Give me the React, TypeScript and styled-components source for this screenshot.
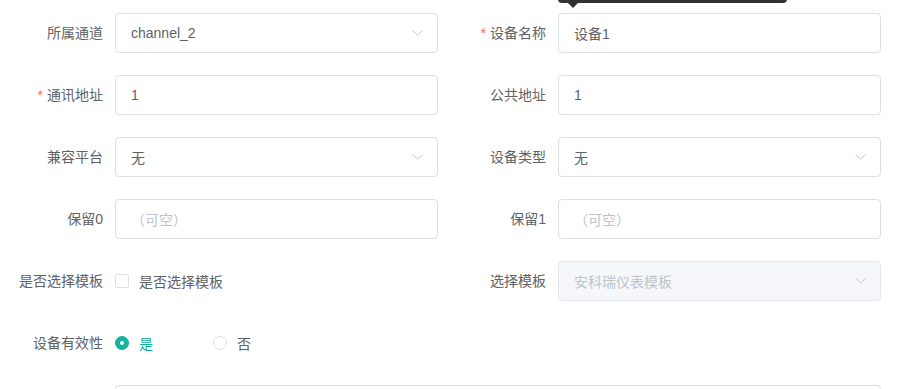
import React from "react";
import styled, { createGlobalStyle } from "styled-components";

const Global = createGlobalStyle`
  html, body { margin: 0; padding: 0; background: #fff; }
  body {
    font-family: "Liberation Sans", "Noto Sans CJK SC", sans-serif;
    font-size: 14px;
    color: #606266;
    overflow: hidden;
  }
`;

const Form = styled.div`
  display: grid;
  grid-template-columns: 438px 438px;
  column-gap: 5px;
  row-gap: 22px;
  padding-top: 13px;
  width: 881px;
`;

const Item = styled.div<{ $full?: boolean }>`
  position: relative;
  display: flex;
  align-items: flex-start;
  min-height: 40px;
  grid-column: ${(p) => (p.$full ? "1 / -1" : "auto")};
`;

const Label = styled.label`
  flex: 0 0 115px;
  box-sizing: border-box;
  padding-right: 12px;
  text-align: right;
  line-height: 40px;
  font-size: 14px;
  color: #606266;
  white-space: nowrap;
`;

const Star = styled.span`
  color: #f56c6c;
  margin-right: 4px;
`;

const Control = styled.div`
  flex: 1;
  min-width: 0;
  display: flex;
  align-items: center;
  min-height: 40px;
`;

const Box = styled.div<{ $disabled?: boolean; $tall?: boolean }>`
  position: relative;
  box-sizing: border-box;
  width: 100%;
  height: ${(p) => (p.$tall ? "64px" : "40px")};
  border: 1px solid ${(p) => (p.$disabled ? "#e4e7ed" : "#dcdfe6")};
  background: ${(p) => (p.$disabled ? "#f5f7fa" : "#fff")};
  border-radius: 4px;
  padding: 0 15px;
  display: flex;
  align-items: center;
  font-size: 14px;
  color: ${(p) => (p.$disabled ? "#c0c4cc" : "#606266")};
`;

const Placeholder = styled.span`
  color: #c0c4cc;
`;

const Arrow = styled.svg`
  position: absolute;
  right: 14px;
  top: 50%;
  margin-top: -3px;
`;

const Check = styled.span`
  display: inline-block;
  box-sizing: border-box;
  width: 14px;
  height: 14px;
  border: 1px solid #dcdfe6;
  border-radius: 2px;
  background: #fff;
`;

const OptText = styled.span<{ $active?: boolean }>`
  margin-left: 10px;
  font-size: 14px;
  color: ${(p) => (p.$active ? "#13b3a0" : "#606266")};
`;

const Option = styled.label<{ $gap?: number }>`
  display: inline-flex;
  align-items: center;
  margin-right: ${(p) => p.$gap ?? 0}px;
`;

const Radio = styled.span<{ $on?: boolean }>`
  box-sizing: border-box;
  width: 14px;
  height: 14px;
  border-radius: 50%;
  border: 1px solid ${(p) => (p.$on ? "#13b3a0" : "#dcdfe6")};
  background: ${(p) => (p.$on ? "#13b3a0" : "#fff")};
  display: inline-flex;
  align-items: center;
  justify-content: center;
  &::after {
    content: "";
    width: 4px;
    height: 4px;
    border-radius: 50%;
    background: #fff;
    display: ${(p) => (p.$on ? "block" : "none")};
  }
`;

const Tooltip = styled.div`
  position: absolute;
  left: 115px;
  bottom: calc(100% + 10px);
  width: 229px;
  height: 34px;
  box-sizing: border-box;
  background: #303133;
  border-radius: 4px;
  &::after {
    content: "";
    position: absolute;
    left: 10px;
    top: 100%;
    border-left: 5px solid transparent;
    border-right: 5px solid transparent;
    border-top: 5px solid #303133;
  }
`;

const Chevron = () => (
  <Arrow width="11" height="6" viewBox="0 0 11 6">
    <path d="M0.5 0.5 L5.5 5 L10.5 0.5" fill="none" stroke="#c0c4cc" strokeWidth="1" />
  </Arrow>
);

type FieldProps = {
  label: string;
  required?: boolean;
  children: React.ReactNode;
  full?: boolean;
  extra?: React.ReactNode;
};

const Field = ({ label, required, children, full, extra }: FieldProps) => (
  <Item $full={full}>
    <Label>
      {required && <Star>*</Star>}
      {label}
    </Label>
    <Control>{children}</Control>
    {extra}
  </Item>
);

const Select = ({ value, disabled }: { value: string; disabled?: boolean }) => (
  <Box $disabled={disabled}>
    {value}
    <Chevron />
  </Box>
);

export default function App() {
  return (
    <>
      <Global />
      <Form>
        <Field label="所属通道">
          <Select value="channel_2" />
        </Field>
        <Field label="设备名称" required extra={<Tooltip aria-hidden />}>
          <Box>设备1</Box>
        </Field>

        <Field label="通讯地址" required>
          <Box>1</Box>
        </Field>
        <Field label="公共地址">
          <Box>1</Box>
        </Field>

        <Field label="兼容平台">
          <Select value="无" />
        </Field>
        <Field label="设备类型">
          <Select value="无" />
        </Field>

        <Field label="保留0">
          <Box>
            <Placeholder>（可空）</Placeholder>
          </Box>
        </Field>
        <Field label="保留1">
          <Box>
            <Placeholder>（可空）</Placeholder>
          </Box>
        </Field>

        <Field label="是否选择模板">
          <Option>
            <Check />
            <OptText>是否选择模板</OptText>
          </Option>
        </Field>
        <Field label="选择模板">
          <Select value="安科瑞仪表模板" disabled />
        </Field>

        <Field label="设备有效性" full>
          <Option $gap={60}>
            <Radio $on />
            <OptText $active>是</OptText>
          </Option>
          <Option>
            <Radio />
            <OptText>否</OptText>
          </Option>
        </Field>

        <Field label="" full>
          <Box $tall />
        </Field>
      </Form>
    </>
  );
}
